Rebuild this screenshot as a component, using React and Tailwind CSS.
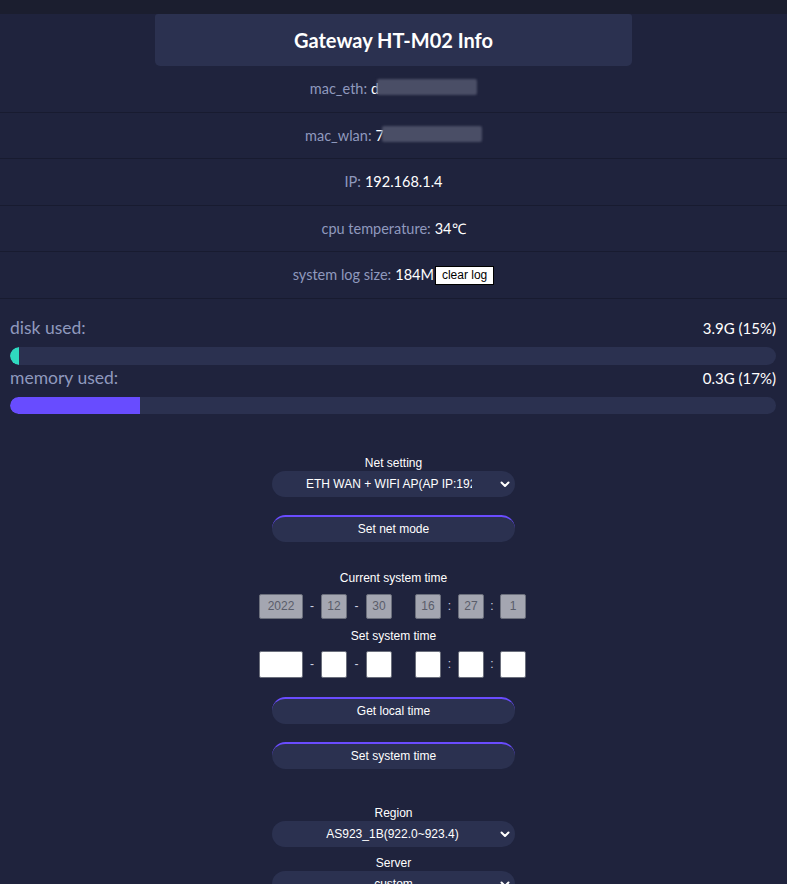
import React from "react";

const Chevron = () => (
  <svg width="12" height="12" viewBox="0 0 24 24" fill="none" stroke="white" strokeWidth="4" strokeLinecap="round" strokeLinejoin="round">
    <path d="M5 9l7 7 7-7" />
  </svg>
);

function Row({ label, children }) {
  return (
    <div className="h-[46.6px] border-b border-[#181b30] flex items-center justify-center text-[14.5px] font-['Lato',sans-serif]">
      <span className="text-[#8f99bd]">{label}</span>
      <span className="text-white ml-[4px] flex items-center">{children}</span>
    </div>
  );
}

function Blur({ first, w }) {
  return (
    <span className="relative inline-flex items-center">
      <span>{first}</span>
      <span className="absolute left-[6px] top-[1px] h-[16px] rounded-[2px] bg-[#4a4e66] blur-[1px]" style={{ width: w }} />
      <span style={{ width: w - 2 }} className="inline-block" />
    </span>
  );
}

function Select({ inner }) {
  return (
    <div className="w-[243px] h-[26px] rounded-full bg-[#2b3150] relative flex items-center text-white text-[12px]">
      {inner}
      <span className="absolute right-[4px] top-[7px]"><Chevron /></span>
    </div>
  );
}

function Btn({ children }) {
  return (
    <div className="w-[243px] h-[27px] rounded-full bg-[#2b3150] border-t-2 border-[#6a4cff] flex items-center justify-center text-white text-[12px]">
      {children}
    </div>
  );
}

function TimeBox({ v, w, set }) {
  return (
    <div
      className={
        (set ? "bg-white h-[27px] " : "bg-[#a4a6b1] h-[25px] text-[#5a5d6a] ") +
        "border border-[#6b6f7c] rounded-[2px] flex items-center justify-center text-[12px]"
      }
      style={{ width: w }}
    >
      {v}
    </div>
  );
}

function TimeRow({ vals, set }) {
  const sep = "text-[#d0d4e4] text-[12px] text-center";
  return (
    <div className="flex items-center -translate-x-[1px]">
      <TimeBox v={vals[0]} w={44} set={set} />
      <span className={sep + " w-[18px]"}>-</span>
      <TimeBox v={vals[1]} w={26} set={set} />
      <span className={sep + " w-[19px]"}>-</span>
      <TimeBox v={vals[2]} w={26} set={set} />
      <span className="w-[23px]" />
      <TimeBox v={vals[3]} w={26} set={set} />
      <span className={sep + " w-[17px]"}>:</span>
      <TimeBox v={vals[4]} w={26} set={set} />
      <span className={sep + " w-[16px]"}>:</span>
      <TimeBox v={vals[5]} w={26} set={set} />
    </div>
  );
}

export default function App() {
  return (
    <div className="w-[787px] h-[884px] overflow-hidden bg-[#1f233d] font-['Liberation_Sans',Arial,sans-serif]">
      <div className="h-[14px] bg-[#1b1e2f]" />
      <div className="flex justify-center">
        <div className="w-[477px] h-[52px] rounded-b-[5px] rounded-t-[3px] bg-[#2b3150] flex items-center justify-center text-white text-[20px] font-bold font-['Lato',sans-serif]">
          Gateway HT-M02 Info
        </div>
      </div>
      <Row label="mac_eth:"><Blur first="d" w={100} /></Row>
      <Row label="mac_wlan:"><Blur first="7" w={100} /></Row>
      <Row label="IP:">192.168.1.4</Row>
      <Row label="cpu temperature:">34℃</Row>
      <Row label="system log size:">
        184M
        <span className="ml-[1px] bg-white text-black border border-black text-[12px] px-[6px] h-[19px] flex items-center font-['Liberation_Sans',sans-serif]">clear log</span>
      </Row>

      <div className="px-[10px] pt-[19px] font-['Lato',sans-serif]">
        <div className="flex justify-between items-center h-[20px]">
          <span className="text-[#8f99bd] text-[17.5px]">disk used:</span>
          <span className="text-white text-[15px] mr-[1px]">3.9G (15%)</span>
        </div>
        <div className="mt-[9px] mr-[1px] h-[18px] rounded-full bg-[#2b3150] overflow-hidden">
          <div className="h-full w-[9px] rounded-l-full bg-[#2fd9bf]" />
        </div>
        <div className="flex justify-between items-center h-[20px] mt-[3px]">
          <span className="text-[#8f99bd] text-[17.5px]">memory used:</span>
          <span className="text-white text-[15px] mr-[1px]">0.3G (17%)</span>
        </div>
        <div className="mt-[9px] mr-[1px] h-[17px] rounded-full bg-[#2b3150] overflow-hidden">
          <div className="h-full w-[130px] rounded-l-full bg-[#684cff]" />
        </div>
      </div>

      <div className="flex flex-col items-center text-white text-[12px]">
        <div className="mt-[42px] h-[15px] flex items-center">Net setting</div>
        <div>
          <Select
            inner={
              <span className="ml-[34px] w-[166px] overflow-hidden whitespace-nowrap">ETH WAN + WIFI AP(AP IP:192.168.1.1)</span>
            }
          />
        </div>
        <div className="mt-[18px]"><Btn>Set net mode</Btn></div>

        <div className="mt-[29px] h-[15px] flex items-center">Current system time</div>
        <div className="mt-[8px]"><TimeRow vals={["2022", "12", "30", "16", "27", "1"]} /></div>
        <div className="mt-[10px] h-[15px] flex items-center">Set system time</div>
        <div className="mt-[7px]"><TimeRow vals={["", "", "", "", "", ""]} set /></div>

        <div className="mt-[19px]"><Btn>Get local time</Btn></div>
        <div className="mt-[18px]"><Btn>Set system time</Btn></div>

        <div className="mt-[37px] h-[15px] flex items-center">Region</div>
        <div>
          <Select inner={<span className="w-full text-center pr-[2px]">AS923_1B(922.0~923.4)</span>} />
        </div>
        <div className="mt-[9px] h-[15px] flex items-center">Server</div>
        <div>
          <Select inner={<span className="w-full text-center">custom</span>} />
        </div>
      </div>
    </div>
  );
}
